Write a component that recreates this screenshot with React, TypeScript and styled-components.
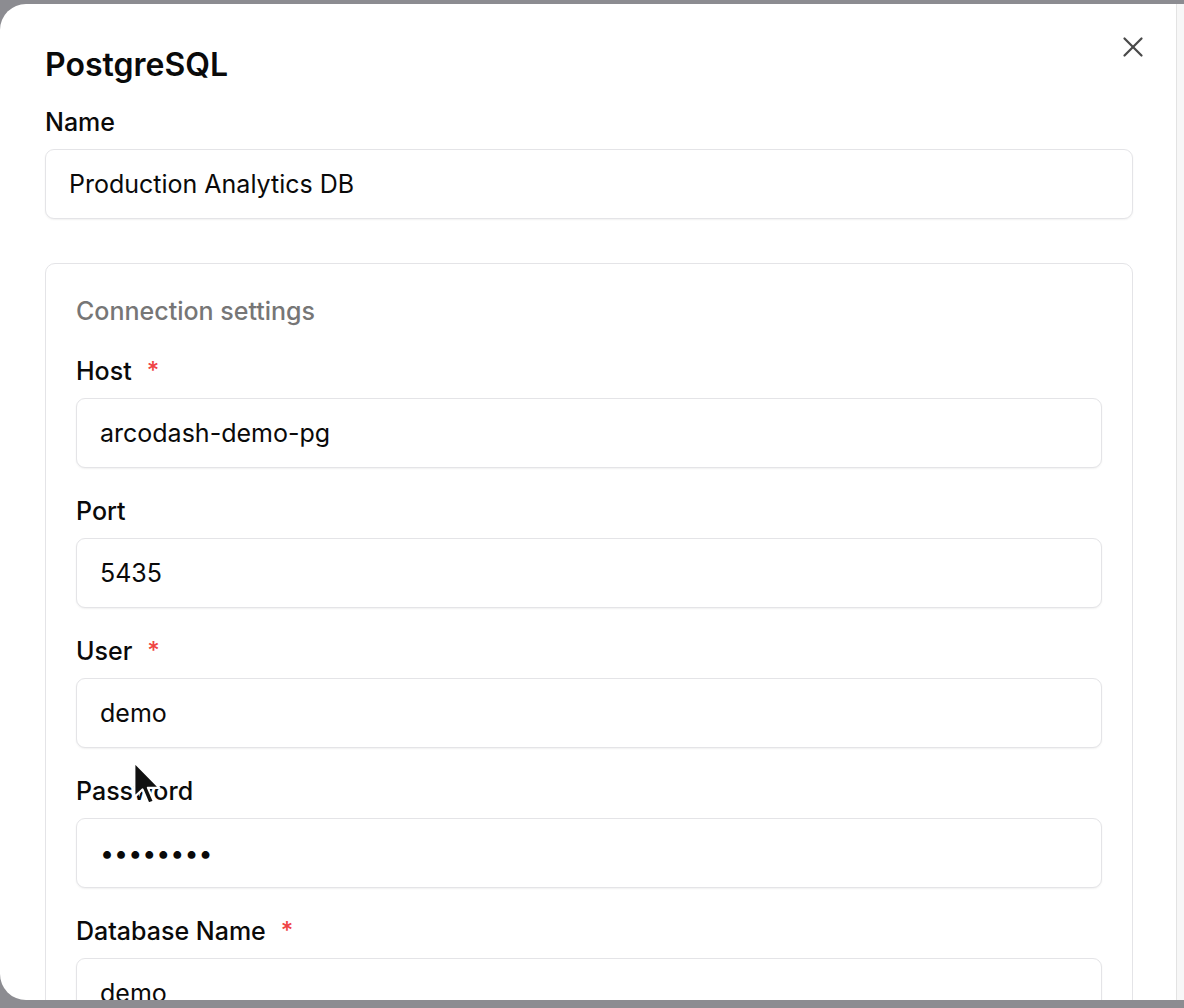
import React from "react";
import styled, { createGlobalStyle } from "styled-components";
import { X } from "lucide-react";

const Global = createGlobalStyle`
  html, body { margin: 0; padding: 0; background: #8c8c91; }
  body { font-family: Inter, "Noto Sans", "Liberation Sans", sans-serif; -webkit-font-smoothing: antialiased; }
  * { box-sizing: border-box; }
`;

const Screen = styled.div`
  width: 1184px;
  height: 1008px;
  padding-top: 4px;
  overflow: hidden;
`;

const Modal = styled.div`
  position: relative;
  height: 996px;
  background: #ffffff;
  border-radius: 26px 0 0 26px;
  display: flex;
  overflow: hidden;
`;

const Content = styled.div`
  flex: 1;
  padding: 43px 43px 0 45px;
  display: flex;
  flex-direction: column;
  overflow: hidden;
`;

const Track = styled.div`
  width: 8px;
  border-left: 1px solid #e3e3e3;
  background: #f7f7f7;
`;

const Title = styled.h2`
  margin: 0;
  font-size: 32px;
  line-height: 36px;
  font-weight: 600;
  color: #0a0a0a;
`;

const CloseButton = styled.button`
  position: absolute;
  top: 26px;
  right: 34px;
  width: 34px;
  height: 34px;
  padding: 0;
  border: none;
  background: transparent;
  color: #4a4a4a;
  display: flex;
  align-items: center;
  justify-content: center;
`;

const Field = styled.div<{ $first?: boolean }>`
  display: flex;
  flex-direction: column;
  gap: 13px;
  margin-top: ${(p) => (p.$first ? "32px" : "29px")};
`;

const Label = styled.label`
  display: flex;
  align-items: center;
  gap: 15px;
  font-size: 25px;
  line-height: 28px;
  font-weight: 500;
  color: #0a0a0a;
`;

const Required = styled.span`
  color: #ef4444;
  font-size: 24px;
  font-weight: 500;
`;

const Input = styled.input`
  width: 100%;
  height: 70px;
  padding: 0 23px;
  border: 1px solid #e4e4e7;
  border-radius: 9px;
  background: #ffffff;
  box-shadow: 0 1px 2px rgba(0, 0, 0, 0.06);
  font-family: Inter, "Noto Sans", "Liberation Sans", sans-serif;
  font-size: 25px;
  color: #0a0a0a;
  outline: none;
  flex-shrink: 0;
`;

const NameField = styled(Field)`
  margin-top: 25px;
`;

const Card = styled.section`
  margin-top: 44px;
  border: 1px solid #e4e4e7;
  border-radius: 10px;
  padding: 33px 30px 40px 30px;
  display: flex;
  flex-direction: column;
`;

const CardTitle = styled.div`
  font-size: 25px;
  line-height: 28px;
  font-weight: 500;
  color: #767676;
`;

const Pointer = styled.svg`
  position: absolute;
  left: 132px;
  top: 756px;
  pointer-events: none;
`;

type FieldDef = { label: string; value: string; required?: boolean; type?: string };

const fields: FieldDef[] = [
  { label: "Host", value: "arcodash-demo-pg", required: true },
  { label: "Port", value: "5435" },
  { label: "User", value: "demo", required: true },
  { label: "Password", value: "demodemo", type: "password" },
  { label: "Database Name", value: "demo", required: true },
];

export default function App() {
  return (
    <>
      <Global />
      <Screen>
        <Modal>
          <Content>
            <Title>PostgreSQL</Title>
            <NameField>
              <Label>Name</Label>
              <Input defaultValue="Production Analytics DB" />
            </NameField>
            <Card>
              <CardTitle>Connection settings</CardTitle>
              {fields.map((f, i) => (
                <Field key={f.label} $first={i === 0}>
                  <Label>
                    {f.label}
                    {f.required && <Required>*</Required>}
                  </Label>
                  <Input type={f.type ?? "text"} defaultValue={f.value} />
                </Field>
              ))}
            </Card>
          </Content>
          <Track />
          <CloseButton aria-label="Close">
            <X size={34} strokeWidth={1.6} />
          </CloseButton>
          <Pointer width="33" height="48" viewBox="0 0 30 44">
            <path
              d="M2 2 L2 34 L9.5 27 L15 40 L20 38 L14.5 25.5 L25 25.5 Z"
              fill="#111"
              stroke="#fff"
              strokeWidth="2"
              strokeLinejoin="round"
            />
          </Pointer>
        </Modal>
      </Screen>
    </>
  );
}
